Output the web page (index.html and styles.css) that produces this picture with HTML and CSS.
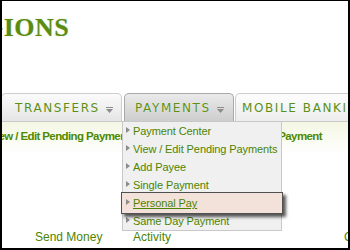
FILE: index.html
```html
<!DOCTYPE html>
<html lang="en">
<head>
    <meta charset="UTF-8">
    <title>Payments</title>
    <link rel="stylesheet" href="styles.css">
</head>
<body>
    <div class="frame">
        <div class="top-gap"></div>
        <div class="masthead">
            <div class="brand"><span class="logo">GIONS</span></div>

            <ul class="tabs">
                <li class="tab tab-transfers">
                    TRANSFERS
                    <svg class="caret" width="7" height="6" viewBox="0 0 7 6"><path d="M0 0.5H7" stroke="#8c8c8c" stroke-width="1"/><path d="M0 2H7L3.5 6Z" fill="#8c8c8c"/></svg>
                </li>
                <li class="tab tab-payments active">
                    PAYMENTS
                    <svg class="caret" width="7" height="6" viewBox="0 0 7 6"><path d="M0 0.5H7" stroke="#8c8c8c" stroke-width="1"/><path d="M0 2H7L3.5 6Z" fill="#8c8c8c"/></svg>
                    <ul class="dropdown">
                        <li><a href="#">Payment Center</a></li>
                        <li><a href="#">View / Edit Pending Payments</a></li>
                        <li><a href="#">Add Payee</a></li>
                        <li><a href="#">Single Payment</a></li>
                        <li class="current"><a href="#">Personal Pay</a></li>
                        <li><a href="#">Same Day Payment</a></li>
                    </ul>
                </li>
                <li class="tab tab-mobile">MOBILE BANKING</li>
            </ul>

            <div class="subnav">
                <span class="sub-first">View / Edit Pending Payments</span>
                <span>Same Day Payment</span>
            </div>
        </div>

        <div class="body-area"></div>

        <div class="links">
            <a href="#">Send Money</a>
            <a href="#">Activity</a>
            <a href="#">Contact Us</a>
        </div>
    </div>
</body>
</html>
```

FILE: styles.css
```css
body {
    margin: 0;
    font-family: "Liberation Sans", Arial, sans-serif;
}

.frame {
    width: 350px;
    height: 250px;
    box-sizing: border-box;
    border-style: solid;
    border-color: #000;
    border-width: 1px 2px 2px 2px;
    background: #fff;
    overflow: hidden;
    display: flex;
    flex-direction: column;
}

.top-gap {
    height: 15px;
    flex: none;
}

.masthead {
    margin-left: -2px;
    background: #fff;
    flex: none;
}

.brand {
    height: 77px;
    overflow: hidden;
}

.logo {
    display: block;
    margin-left: -17px;
    font-family: "Liberation Serif", "Times New Roman", serif;
    font-weight: bold;
    font-size: 26px;
    line-height: 24px;
    letter-spacing: 0.5px;
    color: #5b8c10;
    text-shadow: 0 0 2px rgba(120, 160, 60, 0.35);
}

/* tab bar */
.tabs {
    list-style: none;
    margin: 0;
    padding: 0 0 0 1px;
    display: flex;
    height: 28px;
    border-bottom: 1px solid #c9c9c9;
}

.tab {
    position: relative;
    flex: none;
    box-sizing: border-box;
    height: 28px;
    border: 1px solid #cdcdcd;
    border-bottom: none;
    border-radius: 5px 5px 0 0;
    font-family: "DejaVu Sans", Verdana, sans-serif;
    font-size: 12px;
    line-height: 26px;
    letter-spacing: 1.6px;
    color: #5b8f16;
    text-shadow: 0 0 1px rgba(255, 255, 255, 0.9);
    white-space: nowrap;
    display: flex;
    align-items: flex-start;
    padding-top: 1px;
}

.caret {
    margin: 12px 0 0 6px;
}

.tab-transfers {
    width: 121px;
    padding-left: 13px;
    background: linear-gradient(#fbfbfb, #e5e5e5);
}

.tab-payments {
    width: 110px;
    margin-left: 2px;
    padding-left: 10px;
    border-color: #a9a9a9;
    background: linear-gradient(#eaeaea, #cdcdcd);
}

.tab-mobile {
    width: 140px;
    margin-left: 1px;
    padding-left: 6px;
    background: linear-gradient(#fdfdfd, #ededed);
}

/* dropdown menu */
.dropdown {
    position: absolute;
    top: 27px;
    left: -3px;
    width: 160px;
    box-sizing: border-box;
    margin: 0;
    padding: 0;
    list-style: none;
    background: #f0f0f0;
    border: 1px solid #c8c8c8;
    letter-spacing: 0;
    text-shadow: none;
    z-index: 5;
}

.dropdown li {
    position: relative;
    height: 18px;
    line-height: 18px;
    padding-left: 10px;
    font-family: "Liberation Sans", Arial, sans-serif;
    font-size: 11px;
    letter-spacing: -0.1px;
}

.dropdown li::before {
    content: "";
    position: absolute;
    left: 3px;
    top: 5px;
    border-left: 4px solid #8c8c8c;
    border-top: 3px solid transparent;
    border-bottom: 3px solid transparent;
}

.dropdown a {
    color: #4d8400;
    text-decoration: none;
}

.dropdown li.current {
    z-index: 2;
    height: 22px;
    line-height: 20px;
    margin: -2px -2px -2px -2px;
    padding-left: 11px;
    box-sizing: border-box;
    background: #f3e2da;
    border: 1px solid #505050;
    box-shadow: 3px 3px 3px rgba(0, 0, 0, 0.65);
}

.dropdown li.current::before {
    left: 4px;
    top: 6px;
}

.dropdown li.current a {
    text-decoration: underline;
}

/* sub navigation strip */
.subnav {
    height: 32px;
    box-sizing: border-box;
    padding: 6px 26px 0 0;
    display: flex;
    justify-content: space-between;
    background: linear-gradient(#f3f7e3, #ffffff);
    font-weight: bold;
    font-size: 11.5px;
    line-height: 16px;
    letter-spacing: -0.6px;
    color: #4e8a00;
    white-space: nowrap;
}

.sub-first {
    margin-left: -11px;
}

.body-area {
    flex: 1;
}

/* bottom links */
.links {
    height: 19px;
    flex: none;
    display: grid;
    grid-template-columns: 98px 211px 60px;
    padding-left: 33px;
    font-size: 12px;
    line-height: 17px;
    white-space: nowrap;
}

.links a {
    color: #4d8400;
    text-decoration: none;
}
```
